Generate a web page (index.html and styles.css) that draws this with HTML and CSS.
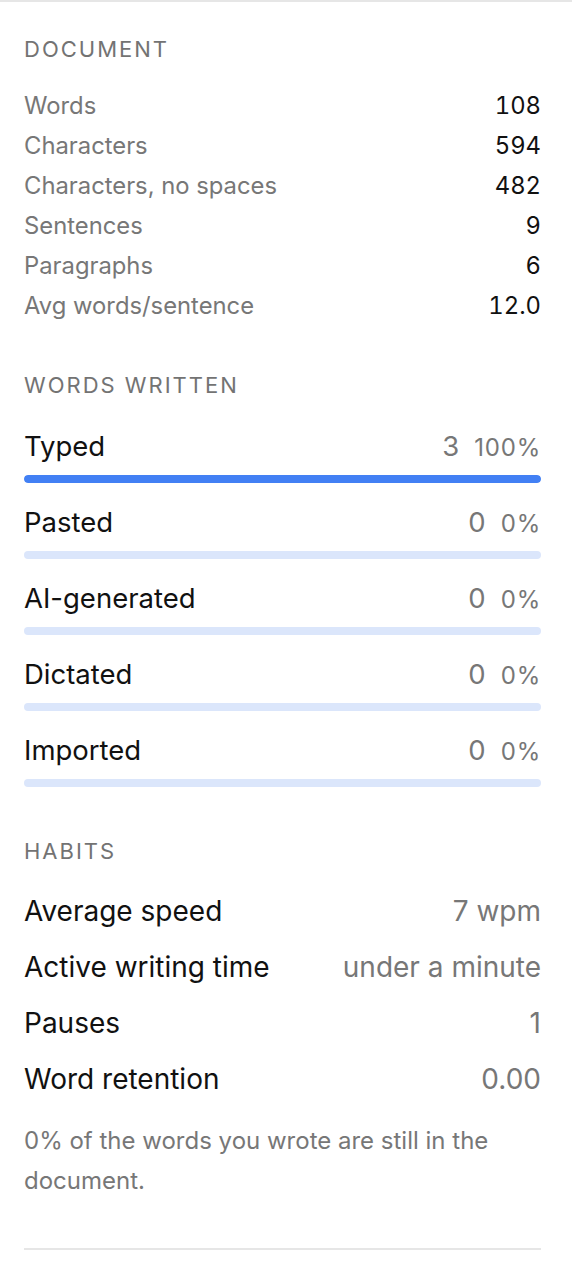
FILE: index.html
```html
<!DOCTYPE html>
<html lang="en">
<head>
<meta charset="utf-8">
<link rel="stylesheet" href="styles.css">
</head>
<body>
<div class="panel">
  <section class="section section-doc">
    <h2 class="heading">DOCUMENT</h2>
    <div class="stats">
      <div class="stat"><span class="stat-label">Words</span><span class="stat-value">108</span></div>
      <div class="stat"><span class="stat-label">Characters</span><span class="stat-value">594</span></div>
      <div class="stat"><span class="stat-label">Characters, no spaces</span><span class="stat-value">482</span></div>
      <div class="stat"><span class="stat-label">Sentences</span><span class="stat-value">9</span></div>
      <div class="stat"><span class="stat-label">Paragraphs</span><span class="stat-value">6</span></div>
      <div class="stat"><span class="stat-label">Avg words/sentence</span><span class="stat-value">12.0</span></div>
    </div>
  </section>
  <section class="section section-words">
    <h2 class="heading">WORDS WRITTEN</h2>
    <div class="sources">
      <div class="source">
        <div class="source-row"><span class="source-label">Typed</span><span class="source-value"><span class="count">3</span><span class="pct">100%</span></span></div>
        <div class="bar"><div class="bar-fill" style="width:100%"></div></div>
      </div>
      <div class="source">
        <div class="source-row"><span class="source-label">Pasted</span><span class="source-value"><span class="count">0</span><span class="pct">0%</span></span></div>
        <div class="bar"><div class="bar-fill" style="width:0%"></div></div>
      </div>
      <div class="source">
        <div class="source-row"><span class="source-label">AI-generated</span><span class="source-value"><span class="count">0</span><span class="pct">0%</span></span></div>
        <div class="bar"><div class="bar-fill" style="width:0%"></div></div>
      </div>
      <div class="source">
        <div class="source-row"><span class="source-label">Dictated</span><span class="source-value"><span class="count">0</span><span class="pct">0%</span></span></div>
        <div class="bar"><div class="bar-fill" style="width:0%"></div></div>
      </div>
      <div class="source">
        <div class="source-row"><span class="source-label">Imported</span><span class="source-value"><span class="count">0</span><span class="pct">0%</span></span></div>
        <div class="bar"><div class="bar-fill" style="width:0%"></div></div>
      </div>
    </div>
  </section>
  <section class="section section-habits">
    <h2 class="heading">HABITS</h2>
    <div class="habits">
      <div class="habit"><span class="habit-label">Average speed</span><span class="habit-value">7 wpm</span></div>
      <div class="habit"><span class="habit-label">Active writing time</span><span class="habit-value">under a minute</span></div>
      <div class="habit"><span class="habit-label">Pauses</span><span class="habit-value">1</span></div>
      <div class="habit"><span class="habit-label">Word retention</span><span class="habit-value">0.00</span></div>
    </div>
    <p class="note">0% of the words you wrote are still in the document.</p>
  </section>
  <hr class="divider">
</div>
</body>
</html>
```
FILE: styles.css
```css
* { box-sizing: border-box; }
html, body { margin: 0; padding: 0; background: #fff; }
body {
  font-family: Inter, "Noto Sans", sans-serif;
  color: #111;
  border-top: 2px solid #e6e6e6;
}
.panel {
  padding: 33px 31px 0 24px;
}
.heading {
  margin: 0;
  font-size: 22px;
  font-weight: 400;
  letter-spacing: 2px;
  color: #737373;
  line-height: 28px;
}
.section-words { margin-top: 46px; }
.section-habits { margin-top: 50px; }
.stats { margin-top: 22px; display: flex; flex-direction: column; }
.stat {
  display: flex;
  justify-content: space-between;
  align-items: center;
  height: 40px;
  font-size: 23.8px;
}
.stat-label { color: #777; }
.stat-value { color: #111; font-variant-numeric: tabular-nums; }
.sources { margin-top: 27px; display: flex; flex-direction: column; gap: 19px; }
.source-row {
  display: flex;
  justify-content: space-between;
  align-items: center;
  height: 40px;
}
.source-label { font-size: 27.5px; color: #111; }
.source-value { color: #777; display: flex; gap: 15px; align-items: baseline; }
.count { font-size: 27.5px; }
.pct { font-size: 24px; letter-spacing: 0.8px; }
.bar {
  margin-top: 9px;
  height: 8px;
  border-radius: 4px;
  background: #dbe6fb;
  overflow: hidden;
}
.bar-fill { height: 100%; background: #4280f4; border-radius: 4px; }
.habits { margin-top: 18px; display: flex; flex-direction: column; }
.habit {
  display: flex;
  justify-content: space-between;
  align-items: center;
  height: 56px;
  font-size: 28px;
}
.habit-label { color: #111; }
.habit-value { color: #777; }
.note {
  margin: 14px 0 0;
  font-size: 24px;
  line-height: 40px;
  color: #777;
}
.divider {
  margin: 47px 0 0;
  border: 0;
  border-top: 2px solid #e6e6e6;
}
```
